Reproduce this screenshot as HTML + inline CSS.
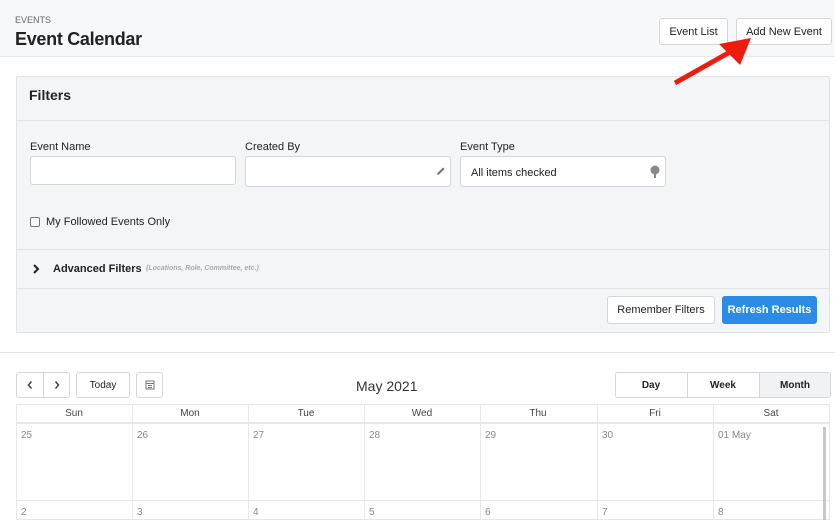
<!DOCTYPE html>
<html><head><style>
*{box-sizing:border-box;margin:0;padding:0}
body{width:835px;height:520px;overflow:hidden;background:#fff;font-family:"Liberation Sans",sans-serif;color:#222;position:relative;font-size:11px}
.a{position:absolute}
.btn{position:absolute;background:#fff;border:1px solid #d4d6d9;border-radius:3px;font-size:11px;display:flex;align-items:center;justify-content:center;color:#222}
.inp{position:absolute;background:#fff;border:1px solid #d4d6d9;border-radius:3px}
.lbl{position:absolute;font-size:11px;color:#222}
.col{position:absolute;top:404px;height:116px;border-left:1px solid #e6e7e8}
.dh{position:absolute;top:408px;font-size:10px;color:#444;width:116px;text-align:center}
.dn{position:absolute;font-size:10px;color:#888}
</style></head><body>
<div class="a" style="left:0;top:0;width:835px;height:57px;background:#f7f8f9;border-bottom:1px solid #e8e9ea"></div>
<div class="a" style="left:15px;top:15px;font-size:9px;color:#666">EVENTS</div>
<div class="a" style="left:15px;top:29px;font-size:18px;font-weight:bold;color:#222;letter-spacing:-0.3px">Event Calendar</div>
<div class="btn" style="left:659px;top:18px;width:69px;height:27px">Event List</div>
<div class="btn" style="left:736px;top:18px;width:96px;height:27px">Add New Event</div>

<div class="a" style="left:16px;top:76px;width:814px;height:257px;background:#f4f5f6;border:1px solid #e2e3e5;border-radius:2px"></div>
<div class="a" style="left:16px;top:120px;width:814px;height:1px;background:#e2e3e5"></div>
<div class="a" style="left:29px;top:87px;font-size:14px;font-weight:bold">Filters</div>
<div class="lbl" style="left:30px;top:141px">Event Name</div>
<div class="inp" style="left:30px;top:156px;width:206px;height:29px"></div>
<div class="lbl" style="left:245px;top:141px">Created By</div>
<div class="inp" style="left:245px;top:156px;width:206px;height:31px"></div>
<svg class="a" style="left:435px;top:166px" width="11" height="11" viewBox="0 0 11 11"><path d="M2 9 L2.5 7 L8 1.5 L9.5 3 L4 8.5 Z" fill="#777"/></svg>
<div class="lbl" style="left:460px;top:141px">Event Type</div>
<div class="inp" style="left:460px;top:156px;width:206px;height:31px"></div>
<div class="lbl" style="left:471px;top:167px">All items checked</div>
<svg class="a" style="left:649px;top:165px" width="12" height="14" viewBox="0 0 12 14"><circle cx="6" cy="5" r="4.5" fill="#888"/><rect x="5" y="8" width="2" height="5" fill="#888"/></svg>
<div class="a" style="left:30px;top:217px;width:10px;height:10px;border:1px solid #777;border-radius:2px;background:#fff"></div>
<div class="lbl" style="left:46px;top:216px">My Followed Events Only</div>
<div class="a" style="left:16px;top:249px;width:814px;height:1px;background:#e2e3e5"></div>
<svg class="a" style="left:32px;top:264px" width="8" height="10" viewBox="0 0 8 10"><path d="M2 1 L6 5 L2 9" stroke="#222" stroke-width="2" fill="none"/></svg>
<div class="lbl" style="left:53px;top:263px;font-weight:bold">Advanced Filters</div>
<div class="a" style="left:146px;top:265px;font-size:7px;font-style:italic;font-weight:bold;color:#aaa">(Locations, Role, Committee, etc.)</div>
<div class="a" style="left:16px;top:288px;width:814px;height:1px;background:#e2e3e5"></div>
<div class="btn" style="left:607px;top:296px;width:108px;height:28px">Remember Filters</div>
<div class="btn" style="left:722px;top:296px;width:95px;height:28px;background:#2b8ce6;border-color:#2b8ce6;color:#fff;font-weight:bold">Refresh Results</div>

<div class="a" style="left:0;top:352px;width:835px;height:1px;background:#e6e7e8"></div>
<div class="btn" style="left:16px;top:372px;width:54px;height:26px"></div>
<div class="a" style="left:43px;top:372px;width:1px;height:26px;background:#d4d6d9"></div>
<svg class="a" style="left:26px;top:380px" width="8" height="10" viewBox="0 0 8 10"><path d="M5.5 1.5 L2.5 5 L5.5 8.5" stroke="#444" stroke-width="1.5" fill="none"/></svg>
<svg class="a" style="left:53px;top:380px" width="8" height="10" viewBox="0 0 8 10"><path d="M2.5 1.5 L5.5 5 L2.5 8.5" stroke="#444" stroke-width="1.5" fill="none"/></svg>
<div class="btn" style="left:76px;top:372px;width:54px;height:26px;font-size:10px">Today</div>
<div class="btn" style="left:136px;top:372px;width:27px;height:26px"><svg width="10" height="10" viewBox="0 0 10 10"><rect x="1" y="1" width="8" height="8" fill="none" stroke="#777"/><path d="M1 3.5H9M3 5.5H7M3 7.5H7" stroke="#777"/></svg></div>
<div class="a" style="left:356px;top:378px;font-size:14px;color:#333">May 2021</div>
<div class="btn" style="left:615px;top:372px;width:216px;height:26px"></div>
<div class="a" style="left:759px;top:373px;width:71px;height:24px;background:#f1f2f3"></div>
<div class="a" style="left:687px;top:372px;width:1px;height:26px;background:#d4d6d9"></div>
<div class="a" style="left:759px;top:372px;width:1px;height:26px;background:#d4d6d9"></div>
<div class="a" style="left:615px;top:380px;width:72px;text-align:center;font-size:10px;font-weight:bold">Day</div>
<div class="a" style="left:687px;top:380px;width:72px;text-align:center;font-size:10px;font-weight:bold">Week</div>
<div class="a" style="left:759px;top:380px;width:72px;text-align:center;font-size:10px;font-weight:bold">Month</div>

<div class="a" style="left:16px;top:404px;width:814px;height:116px;border:1px solid #e6e7e8"></div>
<div class="a" style="left:16px;top:422px;width:814px;height:2px;background:#e6e7e8"></div>
<div class="a" style="left:16px;top:500px;width:814px;height:1px;background:#e6e7e8"></div>
<div class="col" style="left:132px"></div><div class="col" style="left:248px"></div><div class="col" style="left:364px"></div><div class="col" style="left:480px"></div><div class="col" style="left:597px"></div><div class="col" style="left:713px"></div>
<div class="dh" style="left:16px">Sun</div><div class="dh" style="left:132px">Mon</div><div class="dh" style="left:248px">Tue</div><div class="dh" style="left:364px">Wed</div><div class="dh" style="left:480px">Thu</div><div class="dh" style="left:597px">Fri</div><div class="dh" style="left:713px">Sat</div>
<div class="dn" style="left:21px;top:430px">25</div><div class="dn" style="left:137px;top:430px">26</div><div class="dn" style="left:253px;top:430px">27</div><div class="dn" style="left:369px;top:430px">28</div><div class="dn" style="left:485px;top:430px">29</div><div class="dn" style="left:602px;top:430px">30</div><div class="dn" style="left:718px;top:430px">01 May</div>
<div class="dn" style="left:21px;top:507px">2</div><div class="dn" style="left:137px;top:507px">3</div><div class="dn" style="left:253px;top:507px">4</div><div class="dn" style="left:369px;top:507px">5</div><div class="dn" style="left:485px;top:507px">6</div><div class="dn" style="left:602px;top:507px">7</div><div class="dn" style="left:718px;top:507px">8</div>
<div class="a" style="left:823px;top:427px;width:3px;height:93px;background:#c8c8c8"></div>

<svg class="a" style="left:0;top:0" width="835" height="100"><path d="M675 83 L730 52" stroke="#ee1c0f" stroke-width="5"/><path d="M719 44 L751 38 L740 65 Z" fill="#ee1c0f"/></svg>
</body></html>
